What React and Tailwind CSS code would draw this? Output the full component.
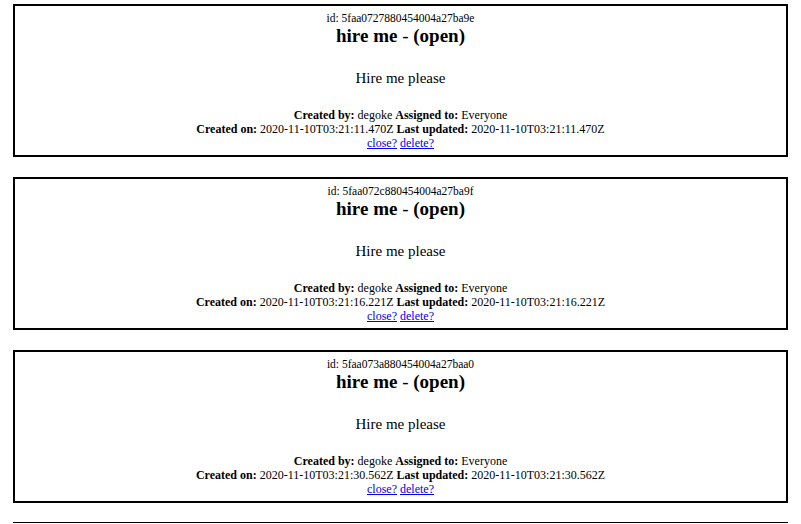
import React from 'react';

const issues = [
  { id: '5faa0727880454004a27ba9e', date: '2020-11-10T03:21:11.470Z' },
  { id: '5faa072c880454004a27ba9f', date: '2020-11-10T03:21:16.221Z' },
  { id: '5faa073a880454004a27baa0', date: '2020-11-10T03:21:30.562Z' },
];

function IssueCard({ issue }) {
  return (
    <div className="w-[775px] h-[153px] border-2 border-black text-center pt-[5px]">
      <div className="text-[11.5px] leading-[14px]">id: {issue.id}</div>
      <div className="text-[19px] leading-[22px]">
        <b>hire me</b> - <b>(open)</b>
      </div>
      <p className="text-[15px] leading-[18px] mt-[22px] mb-[21px]">Hire me please</p>
      <div className="text-[12px] leading-[14px]">
        <b>Created by:</b> degoke <b>Assigned to:</b> Everyone
      </div>
      <div className="text-[12px] leading-[14px]">
        <b>Created on:</b> {issue.date} <b>Last updated:</b> {issue.date}
      </div>
      <div className="text-[12px] leading-[14px]">
        <a href="#" className="text-[#0000ee] underline">close?</a>{' '}
        <a href="#" className="text-[#0000ee] underline">delete?</a>
      </div>
    </div>
  );
}

export default function App() {
  return (
    <div className="min-h-[524px] bg-white text-black pt-[4px] pl-[13px] font-['Liberation_Serif',serif]">
      <div className="flex flex-col gap-[20px]">
        {issues.map(issue => (
          <IssueCard key={issue.id} issue={issue} />
        ))}
      </div>
      <div className="mt-[19px] w-[775px] h-px bg-black" />
    </div>
  );
}
